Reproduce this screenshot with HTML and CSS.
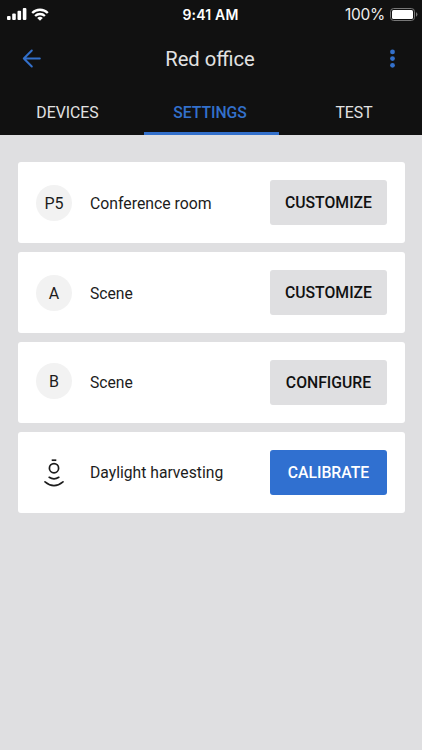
FILE: index.html
```html
<!DOCTYPE html>
<html lang="en">
<head>
<meta charset="utf-8">
<title>Red office</title>
<link rel="stylesheet" href="styles.css">
</head>
<body>
<header class="top">
  <div class="status">
    <div class="status-left">
      <svg width="20" height="12" viewBox="0 0 20 12" fill="#fff"><rect x="0" y="8" width="3.600" height="4" rx="1"/><rect x="5.200" y="5.500" width="3.600" height="6.500" rx="1"/><rect x="10.500" y="2.700" width="3.600" height="9.300" rx="1"/><rect x="15.800" y="0" width="3.600" height="12" rx="1"/></svg>
      <svg width="18" height="13" viewBox="0 0 18 13" fill="none" stroke="#fff" stroke-width="2.300"><path d="M1.200 5A11 11 0 0 1 16.800 5M4.100 8A7 7 0 0 1 13.900 8"/><path fill="#fff" stroke="none" d="M9 12.800L6.200 10A4 4 0 0 1 11.800 10Z"/></svg>
    </div>
    <div class="clock">9:41 AM</div>
    <div class="status-right"><span class="percent">100%</span>
      <svg width="28" height="13" viewBox="0 0 28 13"><rect x=".5" y=".5" width="24" height="12" rx="3.200" fill="none" stroke="#777"/><rect x="2" y="2" width="21" height="9" rx="1.500" fill="#fff"/><path d="M26 4.300a2.400 2.400 0 0 1 0 4.400z" fill="#777"/></svg>
    </div>
  </div>
  <div class="bar">
    <svg width="20" height="20" viewBox="0 0 20 20" fill="none" stroke="#3370cb" stroke-width="2" stroke-linecap="round" stroke-linejoin="round"><path d="M17.800 9.500H1.800M9.800 1.500L1.800 9.500l8 8"/></svg>
    <h1 class="title">Red office</h1>
    <svg width="20" height="20" viewBox="0 0 20 20" fill="#3370cb"><circle cx="10.500" cy="2.900" r="2.400"/><circle cx="10.500" cy="9.600" r="2.400"/><circle cx="10.500" cy="16.300" r="2.400"/></svg>
  </div>
  <nav class="tabs"><a class="tab">DEVICES</a><a class="tab active">SETTINGS</a><a class="tab">TEST</a></nav>
</header>
<main class="list">
  <section class="card"><span class="badge">P5</span><span class="name conference">Conference room</span><button class="btn">CUSTOMIZE</button></section>
  <section class="card"><span class="badge">A</span><span class="name scene">Scene</span><button class="btn">CUSTOMIZE</button></section>
  <section class="card"><span class="badge raised">B</span><span class="name">Scene</span><button class="btn">CONFIGURE</button></section>
  <section class="card"><span class="badge plain"><svg width="36" height="36" viewBox="0 0 36 36" fill="none" stroke="#1c1c1c" stroke-width="1.700"><path d="M15.700 5.200h4.600"/><circle cx="18" cy="13.200" r="4.600"/><path stroke-linecap="round" d="M13.200 22.300Q18 25.500 22.800 22.300M9 26.800Q18 34.400 27 26.800"/></svg></span><span class="name">Daylight harvesting</span><button class="btn primary">CALIBRATE</button></section>
</main>
</body>
</html>
```
FILE: styles.css
```css
* { box-sizing: border-box; }
body { margin: 0; min-height: 750px; background: #dfdfe1; font-family: Roboto, sans-serif; color: #1c1c1c; }
.top { height: 135px; background: #111; color: #e2e2e2; }
.status { height: 28px; padding: 0 6px 0 7px; display: grid; grid-template-columns: 1fr auto 1fr; align-items: center; font-family: Inter, sans-serif; color: #fff; }
.status-left { display: flex; gap: 4px; align-items: center; }
.clock { margin-right: 2px; font-size: 14px; font-weight: 600; letter-spacing: .2px; }
.status-right { display: flex; justify-content: flex-end; align-items: center; gap: 5px; font-size: 15.500px; }
.status-right svg { margin-right: -2px; }
.percent { letter-spacing: -.3px; color: #eee; }
.bar { height: 62px; padding: 0 20px 0 22px; display: flex; justify-content: space-between; align-items: center; }
.title { margin: 0 4px 0 0; font-size: 20.200px; font-weight: 400; }
.tabs { height: 45px; display: grid; grid-template-columns: 144px 135px 1fr; }
.tab { display: flex; align-items: center; justify-content: center; padding-top: 3px; font-size: 15.800px; border-bottom: 3px solid transparent; }
.tab:first-child { padding-right: 9px; }
.tab:last-child { padding-left: 7px; }
.active { padding-right: 3px; color: #3370cb; font-weight: 500; font-size: 15.700px; border-color: #3370cb; }
.list { padding: 27px 17px 0 18px; display: grid; gap: 9px; }
.card { height: 81px; padding: 0 18px; display: flex; align-items: center; background: #fff; border-radius: 3px; }
.badge { width: 36px; height: 36px; margin-top: 1px; display: flex; align-items: center; justify-content: center; background: #f2f2f2; border-radius: 50%; font-size: 16px; }
.raised { margin-top: -3px; }
.plain { margin-top: 0; background: none; }
.name { flex: 1; margin-left: 18px; font-size: 15.700px; }
.conference { padding-top: 2px; font-size: 15.800px; }
.scene { padding-top: 1px; }
.btn { width: 117px; height: 45px; padding: 0; border: 0; border-radius: 3px; background: #dfdfe1; color: #111; font: 500 15.750px Roboto, sans-serif; }
.primary { background: #3070d0; color: #fff; }
```
